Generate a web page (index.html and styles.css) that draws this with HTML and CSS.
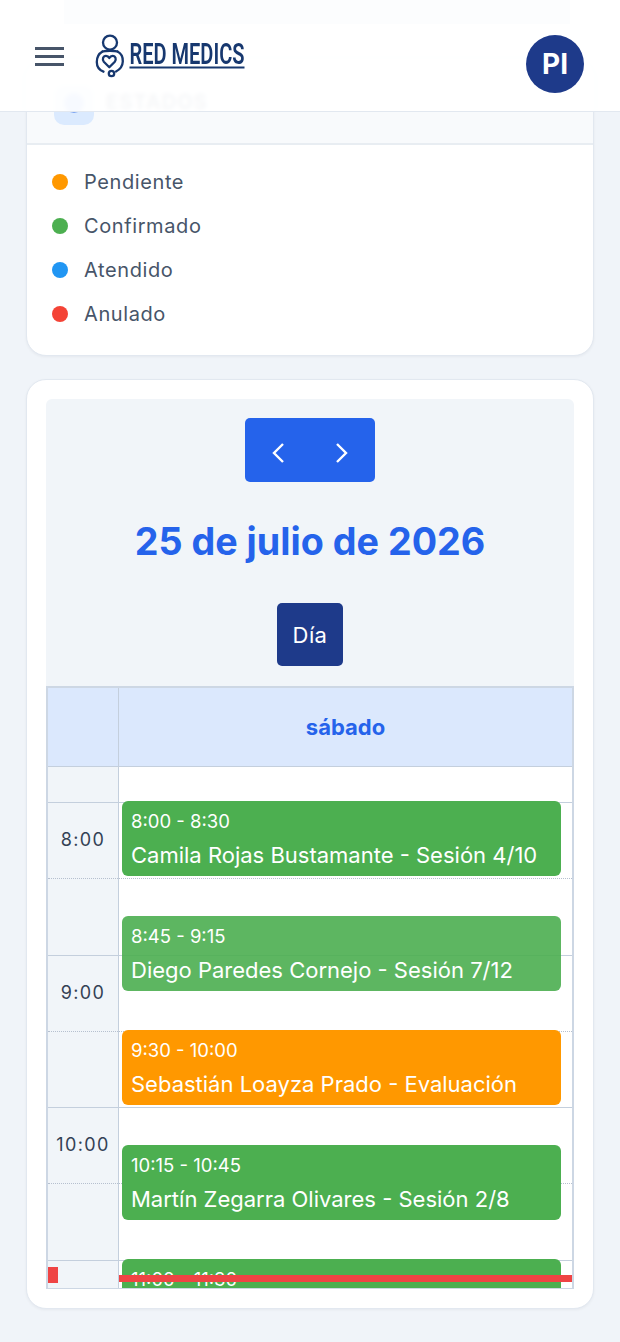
FILE: index.html
```html
<!DOCTYPE html>
<html lang="es">
<head>
<meta charset="utf-8">
<title>Red Medics - Calendario</title>
<link rel="stylesheet" href="styles.css">
</head>
<body>
<header class="topbar">
  <button class="menu-btn" aria-label="Menú"><span></span><span></span><span></span></button>
  <svg class="logo" viewBox="95 32 150 46" width="150" height="46" aria-label="Red Medics">
    <g fill="none" stroke="#17386f" stroke-width="2.300" stroke-linecap="round" stroke-linejoin="round">
      <circle cx="110" cy="42.600" r="7"/>
      <path d="M102.500 51.500C98 54 96.800 58.500 96.800 62C96.800 66.500 99 70 103.500 71.700"/>
      <path d="M117.500 51.500C121.500 53.500 123 57.500 122.800 61.500C122.600 66.500 120 69.500 116 71.500"/>
      <path d="M102.500 51.500C106 50.500 114 50.500 117.500 51.500"/>
      <path d="M109.300 67.200L103.800 61.700C102 59.600 103 55.800 106 55.800C107.700 55.800 108.700 56.800 109.300 58C109.900 56.800 111 55.800 112.600 55.800C115.600 55.800 116.600 59.600 114.800 61.700Z"/>
      <circle cx="111.500" cy="73.500" r="2.700"/>
    </g>
    <text class="logo-text" x="129.500" y="64" textLength="115" lengthAdjust="spacingAndGlyphs">RED MEDICS</text>
    <rect x="129.500" y="66.500" width="115" height="2" fill="#17386f"/>
  </svg>
  <div class="avatar">PI</div>
</header>

<main class="page">
  <section class="card legend-card">
    <div class="legend-head">
      <span class="legend-icon"><span class="legend-glyph"></span></span>
      <h2 class="legend-title">ESTADOS</h2>
    </div>
    <ul class="legend-list">
      <li class="legend-item"><span class="dot dot-pending"></span>Pendiente</li>
      <li class="legend-item"><span class="dot dot-confirmed"></span>Confirmado</li>
      <li class="legend-item"><span class="dot dot-attended"></span>Atendido</li>
      <li class="legend-item"><span class="dot dot-cancelled"></span>Anulado</li>
    </ul>
  </section>

  <section class="card calendar-card">
    <div class="toolbar">
      <div class="nav-group">
        <button class="nav-btn" aria-label="Anterior"><svg width="14" height="22" viewBox="0 0 14 22"><path d="M12 2L3 11l9 9" fill="none" stroke="#fff" stroke-width="2.400"/></svg></button>
        <button class="nav-btn" aria-label="Siguiente"><svg width="14" height="22" viewBox="0 0 14 22"><path d="M1 2l9 9-9 9" fill="none" stroke="#fff" stroke-width="2.400"/></svg></button>
      </div>
      <h1 class="cal-title">25 de julio de 2026</h1>
      <button class="view-btn">Día</button>
    </div>
    <div class="cal-grid">
      <div class="cal-head">
        <div class="head-axis"></div>
        <div class="head-day">sábado</div>
      </div>
      <div class="cal-body">
        <div class="axis">
          <div class="slot-lead"></div>
          <div class="slot minor">8:00</div><div class="slot major"></div>
          <div class="slot minor">9:00</div><div class="slot major"></div>
          <div class="slot minor">10:00</div><div class="slot major"></div>
          <div class="slot minor"></div>
        </div>
        <div class="day">
          <div class="slot-lead"></div>
          <div class="slot minor"></div><div class="slot major"></div>
          <div class="slot minor"></div><div class="slot major"></div>
          <div class="slot minor"></div><div class="slot major"></div>
          <div class="slot minor"></div>
        </div>
        <div class="event confirmed" style="top:34px"><div class="ev-time">8:00 - 8:30</div><div class="ev-title">Camila Rojas Bustamante - Sesión 4/10</div></div>
        <div class="event confirmed faded" style="top:149px"><div class="ev-time">8:45 - 9:15</div><div class="ev-title">Diego Paredes Cornejo - Sesión 7/12</div></div>
        <div class="event pending" style="top:263px"><div class="ev-time">9:30 - 10:00</div><div class="ev-title">Sebastián Loayza Prado - Evaluación</div></div>
        <div class="event confirmed" style="top:378px"><div class="ev-time">10:15 - 10:45</div><div class="ev-title">Martín Zegarra Olivares - Sesión 2/8</div></div>
        <div class="event confirmed" style="top:492px"><div class="ev-time">11:00 - 11:30</div></div>
        <div class="now-arrow"></div>
        <div class="now-line"></div>
      </div>
    </div>
  </section>
</main>
</body>
</html>
```

FILE: styles.css
```css
* { box-sizing: border-box; }
html, body { margin: 0; padding: 0; }
body {
  height: 1342px;
  overflow: hidden;
  background: #f0f4f9;
  font-family: Inter, "Liberation Sans", sans-serif;
  color: #334155;
  position: relative;
}
button { font-family: inherit; border: 0; padding: 0; cursor: pointer; }

.topbar {
  position: absolute;
  top: 0; left: 0; right: 0;
  height: 112px;
  display: flex;
  align-items: flex-start;
  padding: 0 36px 0 35px;
  background: rgba(255, 255, 255, 0.94);
  border-bottom: 1px solid #e2e8f0;
  backdrop-filter: blur(2px);
  z-index: 5;
}
.topbar::before {
  content: "";
  position: absolute;
  left: 64px;
  right: 50px;
  top: 0;
  height: 24px;
  background: #fcfdfe;
  z-index: -1;
}
.menu-btn {
  width: 29px;
  margin-top: 47px;
  display: flex;
  flex-direction: column;
  gap: 5px;
  background: none;
}
.menu-btn span { display: block; height: 3px; background: #475569; }
.logo { margin-left: 31px; margin-top: 32px; }
.logo-text {
  font-family: Roboto, "Liberation Sans", sans-serif;
  font-size: 29px;
  font-weight: 600;
  fill: #17386f;
}
.avatar {
  margin-left: auto;
  margin-top: 35px;
  width: 58px;
  height: 58px;
  border-radius: 50%;
  background: #1e3a8a;
  color: #fff;
  font-size: 28px;
  font-weight: 700;
  display: flex;
  align-items: center;
  justify-content: center;
}

.page {
  display: flex;
  flex-direction: column;
  gap: 23px;
  padding: 60px 26px 0;
}
.card {
  background: #fff;
  border: 1px solid #e2e8f0;
  border-radius: 20px;
  box-shadow: 0 1px 3px rgba(15, 23, 42, 0.05);
}
.legend-card { height: 296px; overflow: hidden; }
.legend-head {
  height: 84px;
  display: flex;
  align-items: center;
  gap: 12px;
  padding: 6px 27px 0;
  background: #f8fafc;
  border-bottom: 2px solid #e8edf2;
}
.legend-icon {
  width: 40px;
  height: 40px;
  border-radius: 10px;
  background: #dbeafe;
  display: flex;
  align-items: center;
  justify-content: center;
}
.legend-glyph { width: 20px; height: 20px; border-radius: 50%; background: #7aa2f0; margin-bottom: 4px; }
.legend-title { margin: 0 0 6px; font-size: 20px; font-weight: 700; letter-spacing: 1px; color: #64748b; }
.legend-list {
  list-style: none;
  margin: 0;
  padding: 14.400px 25px 0;
  display: flex;
  flex-direction: column;
}
.legend-item {
  height: 44.300px;
  display: flex;
  align-items: center;
  gap: 16px;
  font-size: 20px;
  letter-spacing: .6px;
  color: #475569;
}
.dot { width: 16px; height: 16px; border-radius: 50%; }
.dot-pending { background: #ff9800; }
.dot-confirmed { background: #4caf50; }
.dot-attended { background: #2196f3; }
.dot-cancelled { background: #f44336; }

.calendar-card { height: 930px; padding: 19px; }
.toolbar {
  height: 287px;
  background: #f1f5f9;
  border-radius: 6px 6px 0 0;
  display: flex;
  flex-direction: column;
  align-items: center;
  padding-top: 19px;
}
.nav-group { display: flex; width: 130px; height: 64px; background: #2563eb; border-radius: 5px; }
.nav-btn {
  flex: 1;
  background: none;
  padding-top: 6px;
  display: flex;
  align-items: center;
  justify-content: center;
}
.cal-title {
  margin: 33px 0 0;
  height: 52px;
  line-height: 52px;
  font-size: 37.700px;
  font-weight: 700;
  color: #2563eb;
}
.view-btn {
  margin-top: 36px;
  width: 66px;
  height: 63px;
  background: #1e3a8a;
  color: #fff;
  font-size: 22px;
  border-radius: 5px;
  letter-spacing: .4px;
}

.cal-grid {
  height: 603px;
  display: flex;
  flex-direction: column;
  overflow: hidden;
  border: 2px solid #cdd7e4;
  border-bottom-width: 1px;
}
.cal-head { display: flex; height: 79px; flex: none; background: #dbe8fd; border-bottom: 1px solid #c4cfdd; }
.head-axis { width: 71px; border-right: 1px solid #c4cfdd; }
.head-day {
  flex: 1;
  display: flex;
  align-items: center;
  justify-content: center;
  font-size: 22px;
  font-weight: 700;
  color: #2563eb;
}
.cal-body { position: relative; flex: 1; display: flex; overflow: hidden; }
.axis { width: 71px; flex: none; background: #f1f5f9; border-right: 1px solid #c4cfdd; }
.day { flex: 1; }
.slot-lead { height: 36px; border-bottom: 1px solid #c4cfdd; }
.slot {
  height: 76.300px;
  padding-bottom: 2px;
  display: flex;
  align-items: center;
  justify-content: center;
  font-size: 18px;
  letter-spacing: 1.400px;
  color: #334155;
}
.minor { border-bottom: 1px dotted #b6c0cf; }
.major { border-bottom: 1px solid #c4cfdd; }

.event {
  position: absolute;
  left: 74px;
  right: 11px;
  height: 75px;
  border-radius: 6px;
  padding: 8px 9px;
  color: #fff;
  overflow: hidden;
}
.confirmed { background: #4caf50; }
.pending { background: #ff9800; }
.faded { opacity: .9; }
.ev-time { font-size: 18.500px; line-height: 24px; }
.ev-title { font-size: 22px; line-height: 30px; margin-top: 7px; white-space: nowrap; }

.now-line { position: absolute; left: 71px; right: 0; top: 508px; height: 7px; background: #ef4444; }
.now-arrow { position: absolute; left: 0; top: 500px; width: 10px; height: 16px; background: #ef4444; }
```
